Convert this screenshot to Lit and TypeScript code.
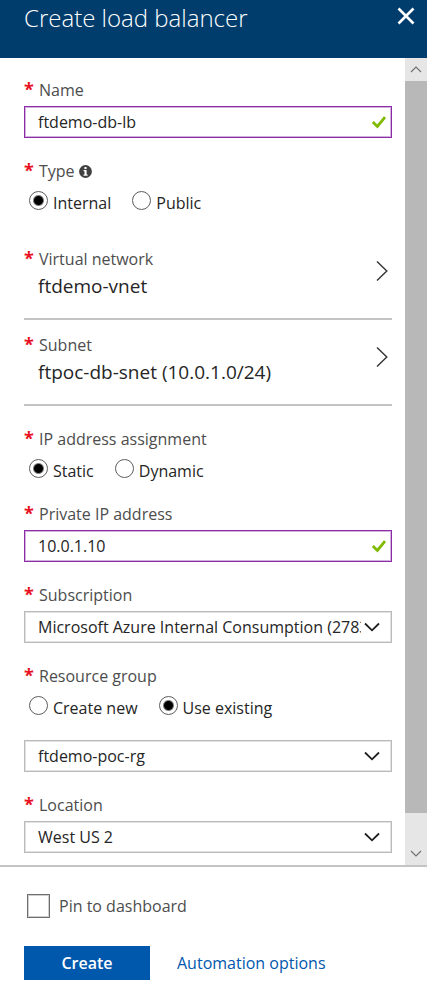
import { LitElement, html, css, svg } from "lit";
import { customElement, property } from "lit/decorators.js";

const check = html`<svg class="check" width="16" height="16" viewBox="0 0 16 16" aria-hidden="true">
  <path d="M1.8 8 L6.4 12.4 L14 3.2" fill="none" stroke="#7fba00" stroke-width="2.8" />
</svg>`;

const base = css`
  *, *::before, *::after { box-sizing: border-box; }
  .label { display: flex; align-items: center; height: 24px; line-height: 24px; font-size: 16px; color: #4d4d4d; }
  .star { width: 15px; height: 24px; flex: none; color: #e81123; font-size: 18px; line-height: 22px; font-weight: 700; }
`;

@customElement("text-field")
class TextField extends LitElement {
  @property() label = "";
  @property() value = "";
  static styles = [base, css`
    :host { display: block; }
    .box { display: grid; margin-top: 4px; }
    .box > * { grid-area: 1 / 1; }
    input { width: 100%; height: 32px; padding: 0 36px 1px 13px; border: 1px solid #8a2da5; outline: 1px solid #d3b0de; outline-offset: -2px;
      background: #fff; color: #252525; font: inherit; font-size: 16px; border-radius: 0; }
    .check { justify-self: end; align-self: center; margin-right: 5px; pointer-events: none; }
  `];
  render() {
    return html`<label class="label" for="field"><span class="star">*</span>${this.label}</label>
      <div class="box"><input id="field" type="text" .value=${this.value} />${check}</div>`;
  }
}

@customElement("select-field")
class SelectField extends LitElement {
  @property() label = "";
  @property() name = "";
  @property() value = "";
  static styles = [base, css`
    :host { display: block; }
    .label { margin-bottom: 4px; }
    .box { display: grid; }
    .box > * { grid-area: 1 / 1; min-width: 0; }
    select { appearance: none; width: 100%; height: 32px; padding: 0 30px 0 13px; border: 1px solid #bababa; outline: 1px solid #e2e2e2; outline-offset: -2px;
      background: #fff; color: #252525; font: inherit; font-size: 16px; border-radius: 0; text-overflow: clip; }
    .chevron { justify-self: end; align-self: center; margin-right: 12px; pointer-events: none; }
  `];
  render() {
    return html`${this.label ? html`<label class="label" for="choice"><span class="star">*</span>${this.label}</label>` : ""}
      <div class="box">
        <select id="choice" aria-label=${this.label || this.name}><option>${this.value}</option></select>
        <svg class="chevron" width="16" height="10" viewBox="0 0 16 10" aria-hidden="true">
          <path d="M1 1.5 L8 8.3 L15 1.5" fill="none" stroke="#1e1e1e" stroke-width="1.8" />
        </svg>
      </div>`;
  }
}

@customElement("radio-field")
class RadioField extends LitElement {
  @property() label = "";
  @property({ type: Array }) options: string[] = [];
  @property() value = "";
  @property({ type: Boolean }) info = false;
  static styles = [base, css`
    :host { display: block; }
    fieldset { border: 0; margin: 0; padding: 0; min-width: 0; }
    legend { padding: 0; width: 100%; }
    .info { margin-left: 4px; }
    .options { display: flex; gap: 21px; padding-left: 5px; margin-top: 4px; }
    .option { display: flex; align-items: center; gap: 5px; height: 26px; font-size: 16px; line-height: 20px; color: #252525; }
    .text { align-self: flex-end; }
    input { appearance: none; width: 19px; height: 19px; margin: 0; border: 1px solid #5c5c5c; border-radius: 50%; background: #fff; }
    input:checked { background: radial-gradient(circle, #000 4px, #fff 6px); }
  `];
  render() {
    return html`<fieldset>
      <legend class="label"><span class="star">*</span>${this.label}${this.info
        ? html`<svg class="info" width="13" height="13" viewBox="0 0 13 13" role="img" aria-label="Information">
            <circle cx="6.5" cy="6.5" r="6.4" fill="#404040" />
            <path d="M5.4 2h2.2v2H5.4zM4.6 5h3v4.4h1v1.3H4.5V9.4h1V6.2h-.9z" fill="#fff" />
          </svg>` : ""}</legend>
      <div class="options">${this.options.map((o) => html`<label class="option">
        <input type="radio" name="choice" .checked=${o === this.value} /><span class="text">${o}</span></label>`)}</div>
    </fieldset>`;
  }
}

@customElement("picker-row")
class PickerRow extends LitElement {
  @property() label = "";
  @property() value = "";
  static styles = [base, css`
    :host { display: block; }
    .picker { display: flex; align-items: flex-start; justify-content: space-between; width: 100%; padding: 13px 4px 20px 0; border: 0;
      border-bottom: 2px solid #c4c4c4; background: none; font: inherit; text-align: left; }
    .copy { display: flex; flex-direction: column; gap: 3px; }
    .value { padding-left: 14px; font-size: 19px; line-height: 24px; color: #252525; }
    .arrow { margin-top: 13px; }
  `];
  render() {
    return html`<button class="picker" type="button">
      <span class="copy"><span class="label"><span class="star">*</span>${this.label}</span><span class="value">${this.value}</span></span>
      <svg class="arrow" width="12" height="22" viewBox="0 0 12 22" aria-hidden="true">
        <path d="M1 1.5 L10.8 11 L1 20.5" fill="none" stroke="#333" stroke-width="1.4" />
      </svg>
    </button>`;
  }
}

const arrow = (d: string) => html`<svg width="12" height="7" viewBox="0 0 12 7" aria-hidden="true">
  ${svg`<path d=${d} fill="none" stroke="#6e6e6e" stroke-width="1.1" />`}</svg>`;

@customElement("app-root")
class AppRoot extends LitElement {
  static styles = [base, css`
    :host { display: flex; flex-direction: column; min-height: 100vh; background: #fff; font-family: "Open Sans", "Noto Sans", sans-serif; }
    .header { display: flex; justify-content: space-between; align-items: flex-start; height: 58px; padding: 2px 11px 0 24px; background: #003c6c; color: #fff; }
    h1 { margin: 0; font-size: 24px; line-height: 32px; font-weight: 300; }
    .close { display: flex; margin-top: 4px; padding: 0; border: 0; background: none; }
    .main { display: flex; }
    .form { flex: 1; min-width: 0; display: flex; flex-direction: column; gap: 21px; padding: 20px 13px 12px 24px; }
    .group { display: flex; flex-direction: column; gap: 22px; }
    .scroll { display: flex; flex-direction: column; width: 22px; background: #e6e6e6; }
    .step { display: flex; align-items: center; justify-content: center; height: 23px; padding: 0; border: 0; background: none; }
    .thumb { flex: 25; background: #b8b8b8; }
    .rest { flex: 1; }
    .footer { display: flex; flex-direction: column; gap: 28px; padding: 27px 24px 7px; border-top: 2px solid #c4c4c4; }
    .pin { display: flex; align-items: center; gap: 9px; height: 24px; padding-left: 3px; font-size: 16px; color: #4d4d4d; }
    .pin input { appearance: none; width: 23px; height: 24px; margin: 0; border: 1px solid #6e6e6e; outline: 1px solid #d0d0d0; outline-offset: -2px; background: #fff; border-radius: 0; }
    .actions { display: flex; align-items: center; gap: 27px; font-size: 16px; }
    .create { width: 126px; height: 34px; padding: 0; border: 0; background: #0058ad; color: #fff; font: inherit; font-weight: 600; }
    .link { color: #0058ad; text-decoration: none; }
  `];
  render() {
    return html`
      <header class="header">
        <h1>Create load balancer</h1>
        <button class="close" type="button" aria-label="Close">
          <svg width="20" height="20" viewBox="0 0 20 20" aria-hidden="true">
            <path d="M2.5 2.5 L17.5 17.5 M17.5 2.5 L2.5 17.5" stroke="#fff" stroke-width="2.6" />
          </svg>
        </button>
      </header>
      <main class="main">
        <form class="form">
          <text-field label="Name" value="ftdemo-db-lb"></text-field>
          <radio-field label="Type" info .options=${["Internal", "Public"]} value="Internal"></radio-field>
          <div>
            <picker-row label="Virtual network" value="ftdemo-vnet"></picker-row>
            <picker-row label="Subnet" value="ftpoc-db-snet (10.0.1.0/24)"></picker-row>
          </div>
          <radio-field label="IP address assignment" .options=${["Static", "Dynamic"]} value="Static"></radio-field>
          <text-field label="Private IP address" value="10.0.1.10"></text-field>
          <select-field label="Subscription" value="Microsoft Azure Internal Consumption (2783"></select-field>
          <div class="group">
            <radio-field label="Resource group" .options=${["Create new", "Use existing"]} value="Use existing"></radio-field>
            <select-field name="Existing resource group" value="ftdemo-poc-rg"></select-field>
          </div>
          <select-field label="Location" value="West US 2"></select-field>
        </form>
        <div class="scroll">
          <button class="step" type="button" aria-label="Scroll up">${arrow("M1 6 L6 1 L11 6")}</button>
          <div class="thumb"></div>
          <div class="rest"></div>
          <button class="step" type="button" aria-label="Scroll down">${arrow("M1 1 L6 6 L11 1")}</button>
        </div>
      </main>
      <footer class="footer">
        <label class="pin"><input type="checkbox" />Pin to dashboard</label>
        <div class="actions">
          <button class="create" type="button">Create</button>
          <a class="link" href="#automation">Automation options</a>
        </div>
      </footer>`;
  }
}
